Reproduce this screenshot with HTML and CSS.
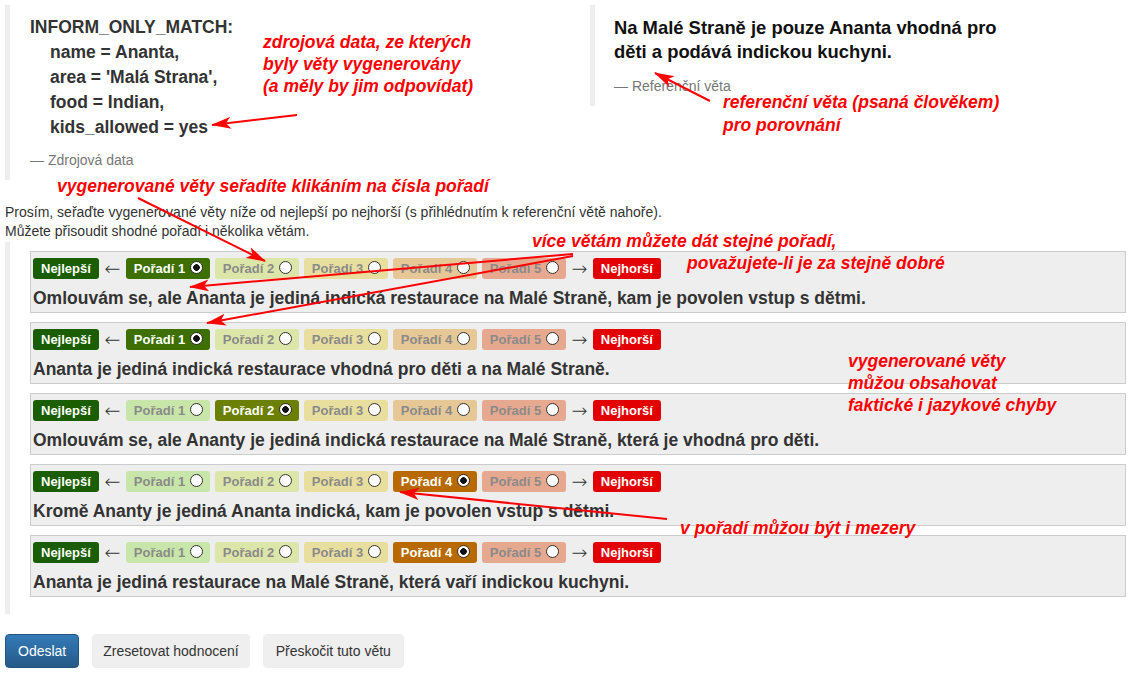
FILE: index.html
```html
<!DOCTYPE html>
<html lang="cs">
<head>
<meta charset="utf-8">
<title>Hodnocení vět</title>
<link rel="stylesheet" href="styles.css">
</head>
<body>
<div class="page">
  <div class="top">
    <blockquote class="bq src">
      <div class="data">
        <div>INFORM_ONLY_MATCH:</div>
        <div class="ind">name = Ananta,</div>
        <div class="ind">area = 'Malá Strana',</div>
        <div class="ind">food = Indian,</div>
        <div class="ind">kids_allowed = yes</div>
      </div>
      <footer>— Zdrojová data</footer>
    </blockquote>
    <blockquote class="bq ref">
      <p class="refsent">Na Malé Straně je pouze Ananta vhodná pro děti a podává indickou kuchyni.</p>
      <footer>— Referenční věta</footer>
    </blockquote>
  </div>

  <p class="instr">Prosím, seřaďte vygenerované věty níže od nejlepší po nejhorší (s přihlédnutím k referenční větě nahoře).<br>Můžete přisoudit shodné pořadí i několika větám.</p>

  <blockquote class="bq rank">
    <div class="item">
      <div class="btns">
        <span class="lbl best">Nejlepší</span><span class="arr">←</span>
        <span class="rk r1 sel">Pořadí 1<i class="radio"></i></span>
        <span class="rk r2">Pořadí 2<i class="radio"></i></span>
        <span class="rk r3">Pořadí 3<i class="radio"></i></span>
        <span class="rk r4">Pořadí 4<i class="radio"></i></span>
        <span class="rk r5">Pořadí 5<i class="radio"></i></span>
        <span class="arr">→</span><span class="lbl worst">Nejhorší</span>
      </div>
      <div class="sent">Omlouvám se, ale Ananta je jediná indická restaurace na Malé Straně, kam je povolen vstup s dětmi.</div>
    </div>
    <div class="item">
      <div class="btns">
        <span class="lbl best">Nejlepší</span><span class="arr">←</span>
        <span class="rk r1 sel">Pořadí 1<i class="radio"></i></span>
        <span class="rk r2">Pořadí 2<i class="radio"></i></span>
        <span class="rk r3">Pořadí 3<i class="radio"></i></span>
        <span class="rk r4">Pořadí 4<i class="radio"></i></span>
        <span class="rk r5">Pořadí 5<i class="radio"></i></span>
        <span class="arr">→</span><span class="lbl worst">Nejhorší</span>
      </div>
      <div class="sent">Ananta je jediná indická restaurace vhodná pro děti a na Malé Straně.</div>
    </div>
    <div class="item">
      <div class="btns">
        <span class="lbl best">Nejlepší</span><span class="arr">←</span>
        <span class="rk r1">Pořadí 1<i class="radio"></i></span>
        <span class="rk r2 sel">Pořadí 2<i class="radio"></i></span>
        <span class="rk r3">Pořadí 3<i class="radio"></i></span>
        <span class="rk r4">Pořadí 4<i class="radio"></i></span>
        <span class="rk r5">Pořadí 5<i class="radio"></i></span>
        <span class="arr">→</span><span class="lbl worst">Nejhorší</span>
      </div>
      <div class="sent">Omlouvám se, ale Ananty je jediná indická restaurace na Malé Straně, která je vhodná pro děti.</div>
    </div>
    <div class="item">
      <div class="btns">
        <span class="lbl best">Nejlepší</span><span class="arr">←</span>
        <span class="rk r1">Pořadí 1<i class="radio"></i></span>
        <span class="rk r2">Pořadí 2<i class="radio"></i></span>
        <span class="rk r3">Pořadí 3<i class="radio"></i></span>
        <span class="rk r4 sel">Pořadí 4<i class="radio"></i></span>
        <span class="rk r5">Pořadí 5<i class="radio"></i></span>
        <span class="arr">→</span><span class="lbl worst">Nejhorší</span>
      </div>
      <div class="sent">Kromě Ananty je jediná Ananta indická, kam je povolen vstup s dětmi.</div>
    </div>
    <div class="item">
      <div class="btns">
        <span class="lbl best">Nejlepší</span><span class="arr">←</span>
        <span class="rk r1">Pořadí 1<i class="radio"></i></span>
        <span class="rk r2">Pořadí 2<i class="radio"></i></span>
        <span class="rk r3">Pořadí 3<i class="radio"></i></span>
        <span class="rk r4 sel">Pořadí 4<i class="radio"></i></span>
        <span class="rk r5">Pořadí 5<i class="radio"></i></span>
        <span class="arr">→</span><span class="lbl worst">Nejhorší</span>
      </div>
      <div class="sent">Ananta je jediná restaurace na Malé Straně, která vaří indickou kuchyni.</div>
    </div>
  </blockquote>

  <div class="actions">
    <button class="btn primary">Odeslat</button>
    <button class="btn reset">Zresetovat hodnocení</button>
    <button class="btn">Přeskočit tuto větu</button>
  </div>
</div>

<svg class="overlay" width="1147" height="676" viewBox="0 0 1147 676">
  <defs>
    <marker id="ah" markerUnits="userSpaceOnUse" markerWidth="20" markerHeight="12" refX="19" refY="6" orient="auto">
      <path d="M0,0 L20,6 L0,12 L5,6 Z" fill="#f00"/>
    </marker>
  </defs>
  <g stroke="#f00" stroke-width="2" fill="none" marker-end="url(#ah)">
    <line x1="297" y1="115" x2="212" y2="125"/>
    <line x1="710" y1="101" x2="655" y2="73"/>
    <line x1="138" y1="198" x2="265" y2="261"/>
    <line x1="573" y1="254" x2="190" y2="287"/>
    <line x1="573" y1="256" x2="207" y2="323"/>
    <line x1="667" y1="519" x2="400" y2="492"/>
  </g>
</svg>

<div class="note n-src">zdrojová data, ze kterých<br>byly věty vygenerovány<br>(a měly by jim odpovídat)</div>
<div class="note n-ref">referenční věta (psaná člověkem)<br>pro porovnání</div>
<div class="note n-click">vygenerované věty seřadíte klikáním na čísla pořadí</div>
<div class="note n-same1">více větám můžete dát stejné pořadí,</div>
<div class="note n-same2">považujete-li je za stejně dobré</div>
<div class="note n-err">vygenerované věty<br>můžou obsahovat<br>faktické i jazykové chyby</div>
<div class="note n-gap">v pořadí můžou být i mezery</div>
</body>
</html>
```

FILE: styles.css
```css
html, body {
  margin: 0;
  padding: 0;
  background: #fff;
}
body {
  font-family: "Liberation Sans", Arial, sans-serif;
  color: #333;
  font-size: 14px;
  line-height: 19px;
  position: relative;
  width: 1147px;
  height: 676px;
  overflow: hidden;
}
.page {
  padding: 5px 3px 0 5px;
}
.top {
  display: flex;
  align-items: flex-start;
}
.bq {
  margin: 0 0 20px 0;
  padding: 10px 20px;
  border-left: 5px solid #eee;
  font-size: 17.5px;
  line-height: 25px;
}
.src {
  width: 540px;
  font-weight: bold;
}
.src .data {
  margin-bottom: 10px;
}
.ind {
  padding-left: 20px;
}
.ref {
  width: 396px;
  padding: 11px 20px 10px 19px;
  font-weight: bold;
  font-size: 18.4px;
  line-height: 24px;
  color: #111;
}
.refsent {
  margin: 0 0 12px 0;
}
.bq footer {
  font-size: 14px;
  line-height: 20px;
  font-weight: normal;
  color: #777;
}
.instr {
  margin: 3px 0 1px 0;
  font-size: 14px;
  line-height: 19px;
}
.rank {
  padding: 9px 18px 8px 20px;
}
.item {
  background: #eee;
  border: 1px solid #ccc;
  padding: 6px 2px 3px 2px;
  margin-bottom: 9px;
}
.btns {
  display: flex;
  align-items: center;
  gap: 5px;
  height: 21px;
}
.lbl, .rk {
  display: flex;
  align-items: center;
  height: 21px;
  padding: 0 8px;
  border-radius: 3px;
  font-size: 13px;
  font-weight: bold;
  line-height: 15px;
  box-sizing: border-box;
}
.lbl { color: #fff; }
.best { background: #1b5e00; }
.worst { background: #e30000; }
.arr {
  font-family: "DejaVu Sans", sans-serif;
  font-weight: 200;
  font-size: 19px;
  color: #333;
  width: 17px;
  text-align: center;
  line-height: 21px;
}
.rk {
  color: #8a8a8a;
  width: 84px;
  padding-right: 7px;
}
.r1 { background: #c8e6a9; }
.r2 { background: #dce6a8; }
.r3 { background: #e8df9f; }
.r4 { background: #e6c796; }
.r5 { background: #e6a98f; }
.rk.sel { color: #fff; }
.r1.sel { background: #3d7000; }
.r2.sel { background: #6c8000; }
.r4.sel { background: #b86a00; }
.radio {
  display: inline-block;
  width: 13px;
  height: 13px;
  margin-left: auto;
  margin-top: -2px;
  border-radius: 50%;
  border: 1px solid #333;
  background: #fff;
  box-sizing: border-box;
  flex: none;
}
.sel .radio {
  background: radial-gradient(circle, #111 0 3px, #fff 3.6px);
}
.sent {
  margin-top: 8px;
  font-size: 17.5px;
  line-height: 22px;
  font-weight: bold;
  color: #333;
}
.actions {
  display: flex;
  gap: 13px;
  margin-top: 3px;
}
.btn {
  font-family: "Liberation Sans", Arial, sans-serif;
  font-size: 14px;
  line-height: 20px;
  padding: 6px 12px;
  border-radius: 4px;
  border: 1px solid #efefef;
  background: #efefef;
  color: #333;
}
.btn.reset {
  padding: 6px 10px;
}
.btn.primary {
  color: #fff;
  border-color: #245580;
  background: linear-gradient(to bottom, #337ab7 0%, #265a88 100%);
}
.overlay {
  position: absolute;
  left: 0;
  top: 0;
  pointer-events: none;
}
.note {
  position: absolute;
  color: #f00;
  font-size: 17.5px;
  line-height: 22px;
  font-weight: bold;
  font-style: italic;
  white-space: nowrap;
}
.n-src { left: 263px; top: 31px; }
.n-ref { left: 723px; top: 91px; line-height: 23px; }
.n-click { left: 57px; top: 175px; }
.n-same1 { left: 532px; top: 230px; }
.n-same2 { left: 687px; top: 252px; }
.n-err { left: 848px; top: 350px; }
.n-gap { left: 680px; top: 517px; }
```
